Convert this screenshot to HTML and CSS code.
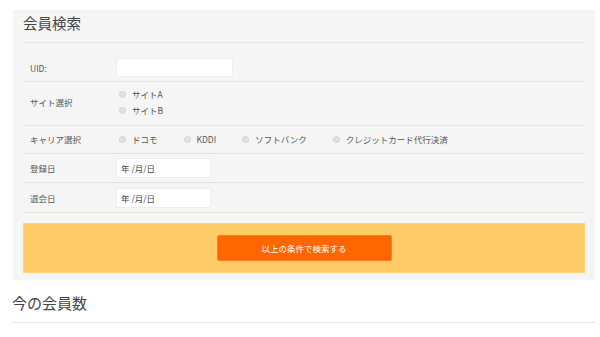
FILE: index.html
```html
<!DOCTYPE html>
<html lang="ja">
<head>
  <meta charset="UTF-8">
  <meta name="viewport" content="width=device-width, initial-scale=1.0">
  <title>会員検索</title>
  <link rel="stylesheet" href="styles.css">
</head>
<body>
  <div class="panel">
    <h2 class="panel-title">会員検索</h2>
    <div class="row row-uid">
      <label class="row-label">UID:</label>
      <div class="row-value"><input type="text" class="field field-uid"></div>
    </div>
    <div class="row row-site">
      <label class="row-label">サイト選択</label>
      <div class="row-value stack">
        <label class="opt"><input type="radio" name="site"><span>サイトA</span></label>
        <label class="opt"><input type="radio" name="site"><span>サイトB</span></label>
      </div>
    </div>
    <div class="row row-carrier">
      <label class="row-label">キャリア選択</label>
      <div class="row-value inline">
        <label class="opt"><input type="radio" name="carrier"><span>ドコモ</span></label>
        <label class="opt"><input type="radio" name="carrier"><span>KDDI</span></label>
        <label class="opt"><input type="radio" name="carrier"><span>ソフトバンク</span></label>
        <label class="opt"><input type="radio" name="carrier"><span>クレジットカード代行決済</span></label>
      </div>
    </div>
    <div class="row row-date">
      <label class="row-label">登録日</label>
      <div class="row-value"><input type="text" class="field field-date" value="年 /月/日"></div>
    </div>
    <div class="row row-date2">
      <label class="row-label">退会日</label>
      <div class="row-value"><input type="text" class="field field-date" value="年 /月/日"></div>
    </div>
    <div class="submit-box">
      <button class="submit-btn">以上の条件で検索する</button>
    </div>
  </div>

  <h2 class="section-title">今の会員数</h2>
</body>
</html>
```

FILE: styles.css
```css
body {
  margin: 0;
  background: #fff;
  color: #555;
  font-family: "Noto Sans CJK JP", "Noto Sans", sans-serif;
}
.panel {
  background: #f5f5f5;
  margin: 10px 5px 0 13px;
  padding: 0 10px 7px 10px;
}
.panel-title {
  margin: 0;
  font-size: 14.5px;
  font-weight: normal;
  color: #444;
  line-height: 20px;
  padding: 3px 0 9px 0;
  border-bottom: 1px solid #e3e3e3;
}
.row {
  display: grid;
  grid-template-columns: 86px 1fr;
  align-items: center;
  padding-left: 7px;
  border-bottom: 1px solid #e3e3e3;
  font-size: 8.5px;
}
.row-uid {
  padding-top: 15px;
  padding-bottom: 4px;
}
.row-site {
  padding-top: 4px;
  padding-bottom: 7px;
}
.row-carrier {
  padding-top: 5px;
  padding-bottom: 6px;
}
.row-date {
  padding-top: 4px;
  padding-bottom: 4px;
}
.row-date2 {
  padding-top: 5px;
  padding-bottom: 4px;
}
.row-label {
  line-height: 16px;
}
.field {
  display: block;
  box-sizing: border-box;
  background: #fff;
  border: 1px solid #eeeeee;
  border-radius: 2px;
  font-family: inherit;
  font-size: 8.5px;
  color: #444;
  padding: 0 4px;
  margin: 0;
  outline: none;
}
.field-uid {
  width: 117px;
  height: 19px;
}
.field-date {
  width: 95px;
  height: 20px;
}
.stack .opt {
  display: flex;
}
.inline {
  display: flex;
  gap: 23px;
}
.opt {
  align-items: center;
  display: flex;
  gap: 6px;
  line-height: 16px;
  padding-left: 3px;
}
.opt input {
  appearance: none;
  -webkit-appearance: none;
  margin: 0;
  width: 7px;
  height: 7px;
  border-radius: 50%;
  background: #e2e2e2;
  border: 1px solid #d3d3d3;
  box-sizing: border-box;
}
.submit-box {
  margin-top: 10px;
  background: #ffcb66;
  border: 1px solid #ffd37a;
  height: 50px;
  box-sizing: border-box;
  display: flex;
  justify-content: center;
  padding-top: 11px;
}
.submit-btn {
  width: 175px;
  height: 26px;
  background: #ff6600;
  color: #fff;
  border: 1px solid #ff7a1f;
  border-radius: 2px;
  font-family: inherit;
  font-size: 8.5px;
  cursor: pointer;
}
.section-title {
  margin: 13px 5px 0 12px;
  font-size: 15px;
  font-weight: normal;
  color: #444;
  line-height: 20px;
  padding-bottom: 9px;
  border-bottom: 1px solid #e6e6e6;
}
```
